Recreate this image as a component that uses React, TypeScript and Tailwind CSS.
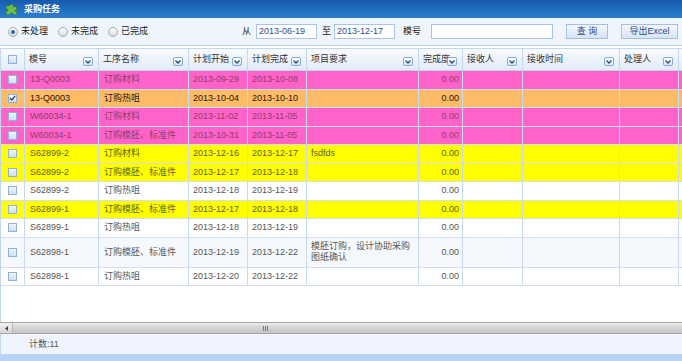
import React from 'react';

type Row = {
  code: string;
  step: string;
  start: string;
  end: string;
  note?: string;
  tone: 'pink' | 'orange' | 'yellow' | 'white' | 'pale';
  checked?: boolean;
  tall?: boolean;
};

const rows: Row[] = [
  { code: '13-Q0003', step: '订购材料', start: '2013-09-29', end: '2013-10-08', tone: 'pink' },
  { code: '13-Q0003', step: '订购热咀', start: '2013-10-04', end: '2013-10-10', tone: 'orange', checked: true },
  { code: 'W60034-1', step: '订购材料', start: '2013-11-02', end: '2013-11-05', tone: 'pink' },
  { code: 'W60034-1', step: '订购模胚、标准件', start: '2013-10-31', end: '2013-11-05', tone: 'pink' },
  { code: 'S62899-2', step: '订购材料', start: '2013-12-16', end: '2013-12-17', note: 'fsdfds', tone: 'yellow' },
  { code: 'S62899-2', step: '订购模胚、标准件', start: '2013-12-17', end: '2013-12-18', tone: 'yellow' },
  { code: 'S62899-2', step: '订购热咀', start: '2013-12-18', end: '2013-12-19', tone: 'white' },
  { code: 'S62899-1', step: '订购模胚、标准件', start: '2013-12-17', end: '2013-12-18', tone: 'yellow' },
  { code: 'S62899-1', step: '订购热咀', start: '2013-12-18', end: '2013-12-19', tone: 'white' },
  { code: 'S62898-1', step: '订购模胚、标准件', start: '2013-12-19', end: '2013-12-22', note: '模胚订购，设计协助采购图纸确认', tone: 'pale', tall: true },
  { code: 'S62898-1', step: '订购热咀', start: '2013-12-20', end: '2013-12-22', tone: 'white' },
];

const toneClass: Record<Row['tone'], string> = {
  pink: 'bg-[#ff62c8] text-[#8e3f6e]',
  orange: 'bg-[#ffbb66] text-[#1e1408]',
  yellow: 'bg-[#ffff00] text-[#5e5e1c]',
  white: 'bg-white text-[#555]',
  pale: 'bg-[#f5f9fe] text-[#555]',
};

const cols = 'grid grid-cols-[24px_74px_90px_59px_59px_112px_44px_60px_97px_59px_1fr]';

function DropBtn() {
  return (
    <span className="absolute right-[5px] top-[8px] flex h-[9px] w-[10px] items-center justify-center rounded-[2px] border border-[#88a9d4] bg-gradient-to-b from-white to-[#d9e6f6]">
      <svg width="6" height="4" viewBox="0 0 6 4">
        <path d="M0.5 0.5 L3 3 L5.5 0.5" fill="none" stroke="#24497d" strokeWidth="1.3" />
      </svg>
    </span>
  );
}

function Check({ checked }: { checked?: boolean }) {
  return (
    <span className="flex h-[9px] w-[9px] items-center justify-center border border-[#93b2d8] bg-gradient-to-b from-[#f1f6fc] to-[#cfdff2]">
      {checked && (
        <svg width="7" height="6" viewBox="0 0 7 6">
          <path d="M0.8 3 L2.8 5 L6.2 0.8" fill="none" stroke="#2b3f66" strokeWidth="1.2" />
        </svg>
      )}
    </span>
  );
}

function Radio({ on, label }: { on?: boolean; label: string }) {
  return (
    <label className="flex items-center gap-[3px]">
      <span className="flex h-[10px] w-[10px] items-center justify-center rounded-full border border-[#a3a9b2] bg-gradient-to-b from-white to-[#d8dde4]">
        {on && <span className="h-[4px] w-[4px] rounded-full bg-[#2a62b8]" />}
      </span>
      <span className="text-[#222]">{label}</span>
    </label>
  );
}

const headers = ['模号', '工序名称', '计划开始', '计划完成', '项目要求', '完成度', '接收人', '接收时间', '处理人'];

export default function App() {
  return (
    <div className="flex h-[361px] w-[682px] flex-col overflow-hidden bg-white font-['Liberation_Sans','Noto_Sans_CJK_SC',sans-serif] text-[9px] leading-[11px]">
      {/* Title bar */}
      <div className="flex h-[18px] items-center gap-[7px] bg-gradient-to-b from-[#185aae] to-[#2b80cf] pl-[6px]">
        <svg width="11" height="11" viewBox="0 0 11 11">
          <path d="M4 0.5h3v2.5h3.5v3h-1.5v1.5h1.5v3h-3.5v-1.5h-3v1.5h-3.5v-3.5h1.5v-2h-1.5v-3h3z" fill="#6cc04a" stroke="#3e8d2a" strokeWidth="0.6" />
        </svg>
        <span className="font-bold text-white">采购任务</span>
      </div>

      {/* Toolbar */}
      <div className="flex h-[28px] items-center border-b border-[#b5cdea] bg-[#eef5fd] pl-[8px] text-[#222]">
        <div className="flex items-center gap-[10px]">
          <Radio on label="未处理" />
          <Radio label="未完成" />
          <Radio label="已完成" />
        </div>
        <span className="ml-[94px]">从</span>
        <span className="ml-[5px] flex h-[15px] w-[61px] items-center border border-[#a9c4e6] bg-white pl-[2px] text-[#2c4e96]">2013-06-19</span>
        <span className="ml-[5px]">至</span>
        <span className="ml-[3px] flex h-[15px] w-[61px] items-center border border-[#a9c4e6] bg-white pl-[2px] text-[#2c4e96]">2013-12-17</span>
        <span className="ml-[8px]">模号</span>
        <span className="ml-[10px] h-[15px] w-[122px] border border-[#a9c4e6] bg-white" />
        <span className="ml-[13px] flex h-[15px] w-[42px] items-center justify-center border border-[#a3c0e4] bg-gradient-to-b from-[#f4f8fd] to-[#d6e4f5] text-[#1e4c8c]">查 询</span>
        <span className="ml-[13px] flex h-[15px] w-[57px] items-center justify-center border border-[#a3c0e4] bg-gradient-to-b from-[#f4f8fd] to-[#d6e4f5] text-[#1e4c8c]">导出Excel</span>
      </div>

      {/* Grid */}
      <div className="mt-[2px] flex flex-1 flex-col border-l border-[#c2d6ee]">
        <div className={`${cols} h-[23px] border-y border-[#c2d6ee] bg-gradient-to-b from-[#f9fbfe] to-[#e1ebf8] text-[#333]`}>
          <div className="flex items-center justify-center border-r border-[#c2d6ee]">
            <Check />
          </div>
          {headers.map((h) => (
            <div key={h} className="relative flex items-center border-r border-[#c2d6ee] pl-[4px]">
              {h}
              <DropBtn />
            </div>
          ))}
          <div />
        </div>

        {rows.map((r, i) => (
          <div
            key={i}
            className={`${cols} ${r.tall ? 'h-[30px]' : 'h-[18.5px]'} border-b border-[#d3dfee] ${toneClass[r.tone]}`}
          >
            <div className="flex items-center justify-center border-r border-[#c8daf0]">
              <Check checked={r.checked} />
            </div>
            <div className="flex items-center border-r border-[#c8daf0] pl-[5px]">{r.code}</div>
            <div className="flex items-center border-r border-[#c8daf0] pl-[5px]">{r.step}</div>
            <div className="flex items-center border-r border-[#c8daf0] pl-[4px]">{r.start}</div>
            <div className="flex items-center border-r border-[#c8daf0] pl-[4px]">{r.end}</div>
            <div className="flex items-center border-r border-[#c8daf0] pl-[4px] pr-[6px]">{r.note}</div>
            <div className="flex items-center justify-end border-r border-[#c8daf0] pr-[3px]">0.00</div>
            <div className="border-r border-[#c8daf0]" />
            <div className="border-r border-[#c8daf0]" />
            <div className="border-r border-[#c8daf0]" />
            <div />
          </div>
        ))}
        <div className="flex-1" />
      </div>

      {/* Horizontal scrollbar */}
      <div className="flex h-[12px] border-y border-[#a7a7a7] bg-[#e6e6e6]">
        <div className="flex w-[13px] items-center justify-center border-r border-[#b5b5b5] bg-gradient-to-b from-[#f2f2f2] to-[#d4d4d4]">
          <svg width="3" height="5" viewBox="0 0 3 5">
            <path d="M3 0 L0 2.5 L3 5z" fill="#444" />
          </svg>
        </div>
        <div className="flex flex-1 items-center justify-start bg-gradient-to-b from-[#ececec] via-[#d2d2d2] to-[#c6c6c6] pl-[250px]">
          <span className="flex gap-[1px]">
            <span className="h-[5px] w-[1px] bg-[#777]" />
            <span className="h-[5px] w-[1px] bg-[#777]" />
            <span className="h-[5px] w-[1px] bg-[#777]" />
          </span>
        </div>
      </div>

      {/* Footer */}
      <div className="flex h-[20px] items-center border-l border-[#c2d6ee] bg-[#eef3fd] pl-[28px] text-[#555]">计数:11</div>
      <div className="h-[7px] bg-[#b9d3f6]" />
    </div>
  );
}
